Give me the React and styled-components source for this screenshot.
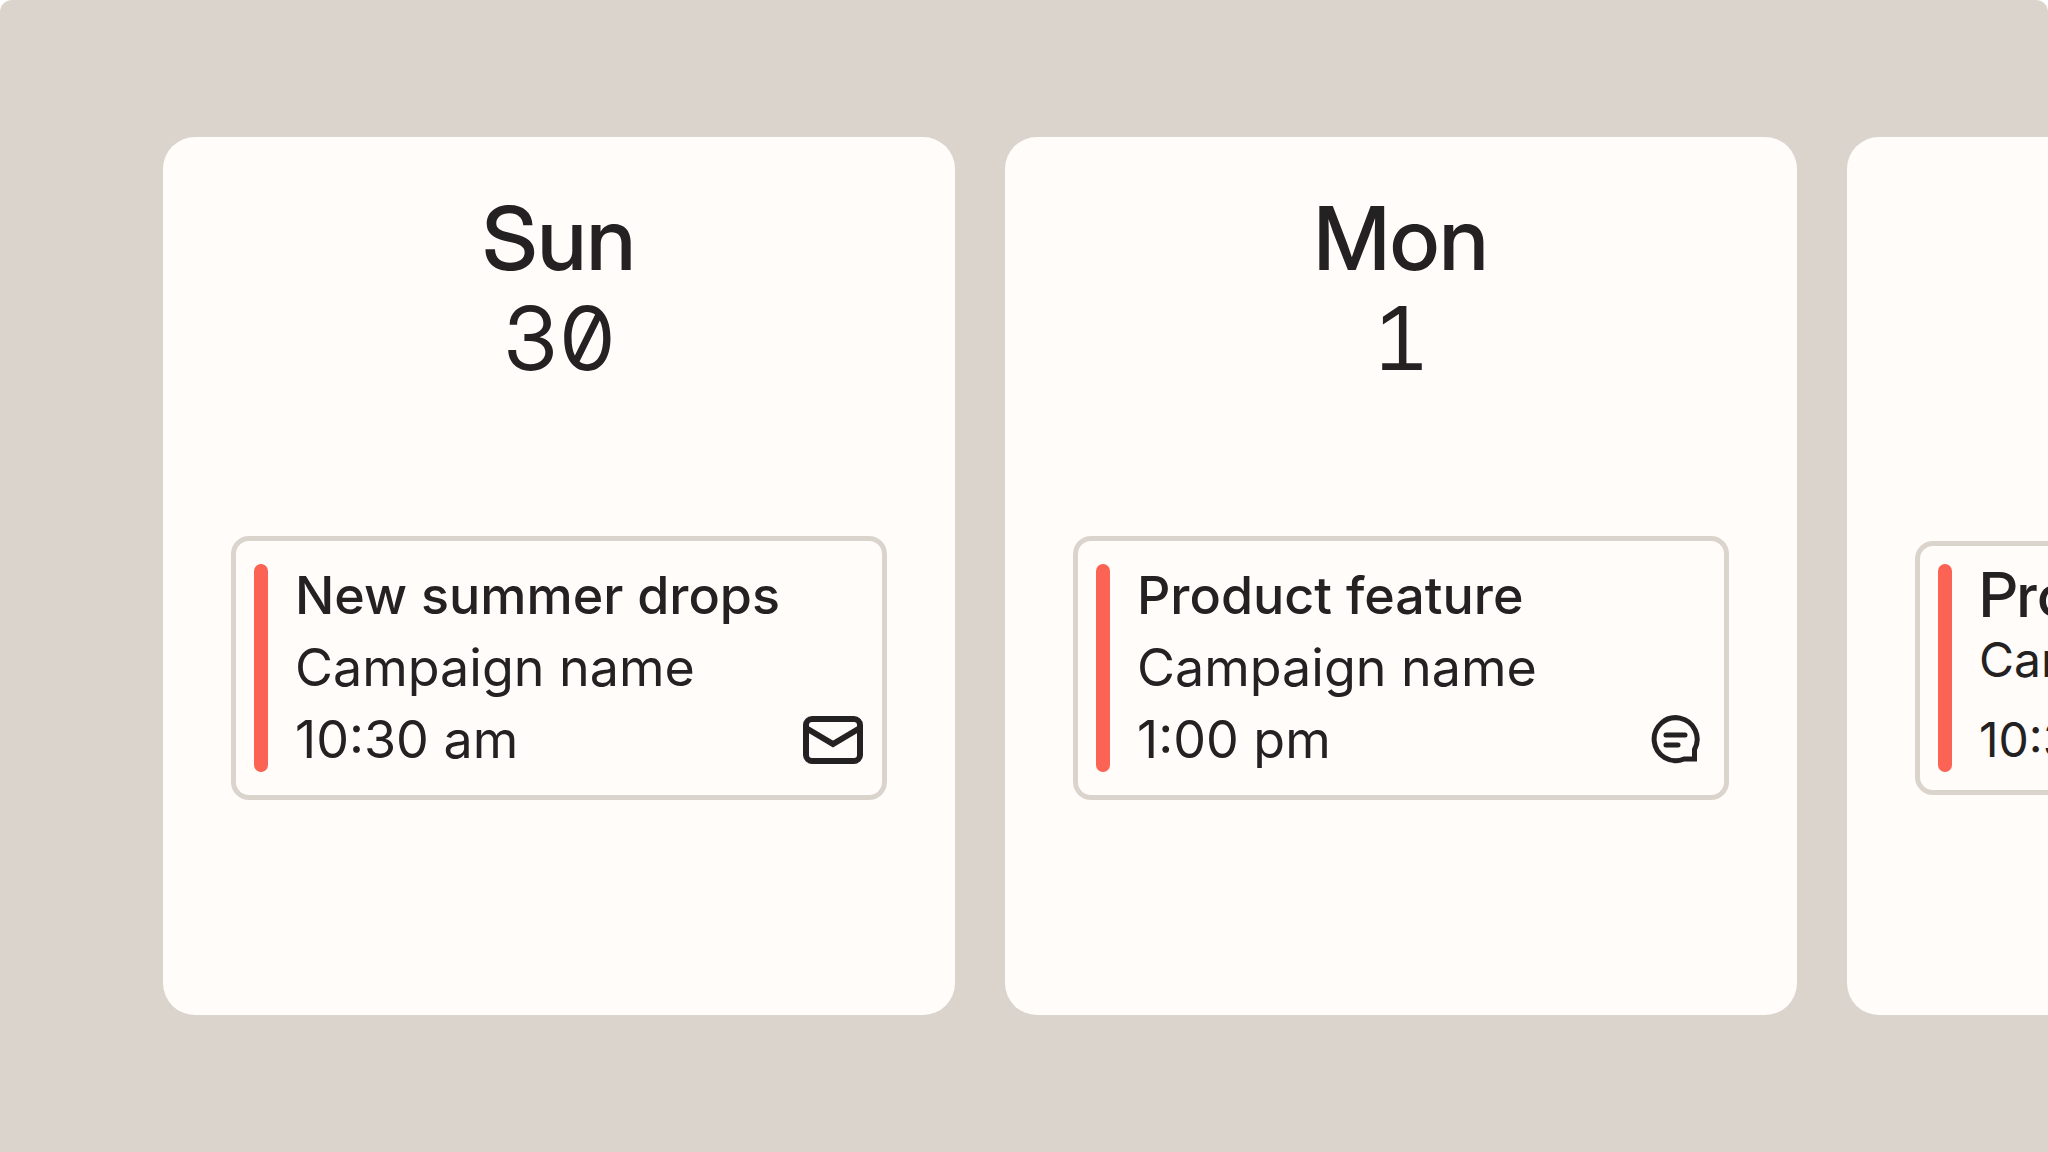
import styled, { createGlobalStyle } from "styled-components";

const GlobalStyle = createGlobalStyle`
  * {
    box-sizing: border-box;
  }
  body {
    margin: 0;
    background: #fff;
    color: #232122;
    font-family: "Inter", "Liberation Sans", sans-serif;
  }
  h2, h3, p {
    margin: 0;
  }
`;

const displayFont = `"Inter Display", "Inter", "Liberation Sans", sans-serif`;

const Board = styled.main`
  display: flex;
  align-items: center;
  gap: 50px;
  min-height: 100vh;
  padding: 0 0 0 163px;
  overflow: hidden;
  background: #dbd4cd;
  border-radius: 12px 12px 0 0;
`;
const DayCard = styled.section`
  flex: 0 0 calc((100vw - 464px) / 2);
  padding: 51px 68px 215px;
  border-radius: 32px;
  background: #fffcf9;
`;
const DayHeader = styled.header`
  text-align: center;
  font-family: ${displayFont};
  font-size: 88px;
  line-height: 100px;
  > h2 {
    font-size: 88px;
    font-weight: 500;
  }
  > p {
    font-feature-settings: "tnum", "zero";
  }
`;
const EventSlot = styled.div`
  display: flex;
  align-items: center;
  min-height: 264px;
  margin-top: 148px;
`;
const Event = styled.article`
  display: flex;
  flex: 1;
  gap: 27px;
  min-width: 0;
  padding: ${({ $compact }) => ($compact ? "14px" : "19px")} 18px;
  border: 5px solid #dbd4cd;
  border-radius: 18px;
  white-space: nowrap;
`;
const Accent = styled.span`
  flex: 0 0 14px;
  min-height: 208px;
  margin: 4px 0;
  border-radius: 7px;
  background: #fb6355;
`;
const Details = styled.div`
  flex: 1;
  min-width: 0;
  font-size: ${({ $compact }) => ($compact ? "48px" : "52px")};
  line-height: ${({ $compact }) => ($compact ? "60px" : "72px")};
  > h3 {
    font-family: ${({ $compact }) => ($compact ? displayFont : "inherit")};
    font-size: ${({ $compact }) => ($compact ? "62px" : "52px")};
    line-height: ${({ $compact }) => ($compact ? "70px" : "72px")};
    font-weight: 500;
  }
`;
const TimeRow = styled.div`
  display: flex;
  align-items: center;
  justify-content: space-between;
  margin-top: ${({ $compact }) => ($compact ? "20px" : "0")};
  > svg {
    display: block;
  }
`;

const MailIcon = () => (
  <svg width="62" height="50" viewBox="0 0 62 50" fill="none" stroke="currentColor" strokeWidth="6">
    <rect x="4" y="4" width="54" height="42" rx="6" />
    <path d="M4 13 L31 29 L58 13" />
  </svg>
);

const ChatIcon = () => (
  <svg width="62" height="50" viewBox="-7 0 62 50" fill="none" stroke="currentColor" strokeWidth="5">
    <path d="M43.5 44 V34.5 A21.5 21.5 0 1 0 33 44 Z" />
    <path d="M15 20 H34 M15 30 H27" strokeLinecap="round" />
  </svg>
);

const days = [
  { name: "Sun", date: "30", title: "New summer drops", time: "10:30 am", icon: MailIcon },
  { name: "Mon", date: "1", title: "Product feature", time: "1:00 pm", icon: ChatIcon },
  { name: "Tue", date: "2", title: "Product feature", time: "10:30 am", icon: MailIcon, compact: true },
];

export const Day = ({ name, date, title, time, icon: Icon, compact }) => {
  return (
    <DayCard>
      <DayHeader>
        <h2>{name}</h2>
        <p>{date}</p>
      </DayHeader>
      <EventSlot>
        <Event $compact={compact}>
          <Accent />
          <Details $compact={compact}>
            <h3>{title}</h3>
            <p>Campaign name</p>
            <TimeRow $compact={compact}>
              <time>{time}</time>
              <Icon />
            </TimeRow>
          </Details>
        </Event>
      </EventSlot>
    </DayCard>
  );
};

const App = () => {
  return (
    <>
      <GlobalStyle />
      <Board>
        {days.map((day) => (
          <Day key={day.name} {...day} />
        ))}
      </Board>
    </>
  );
};

export default App;
